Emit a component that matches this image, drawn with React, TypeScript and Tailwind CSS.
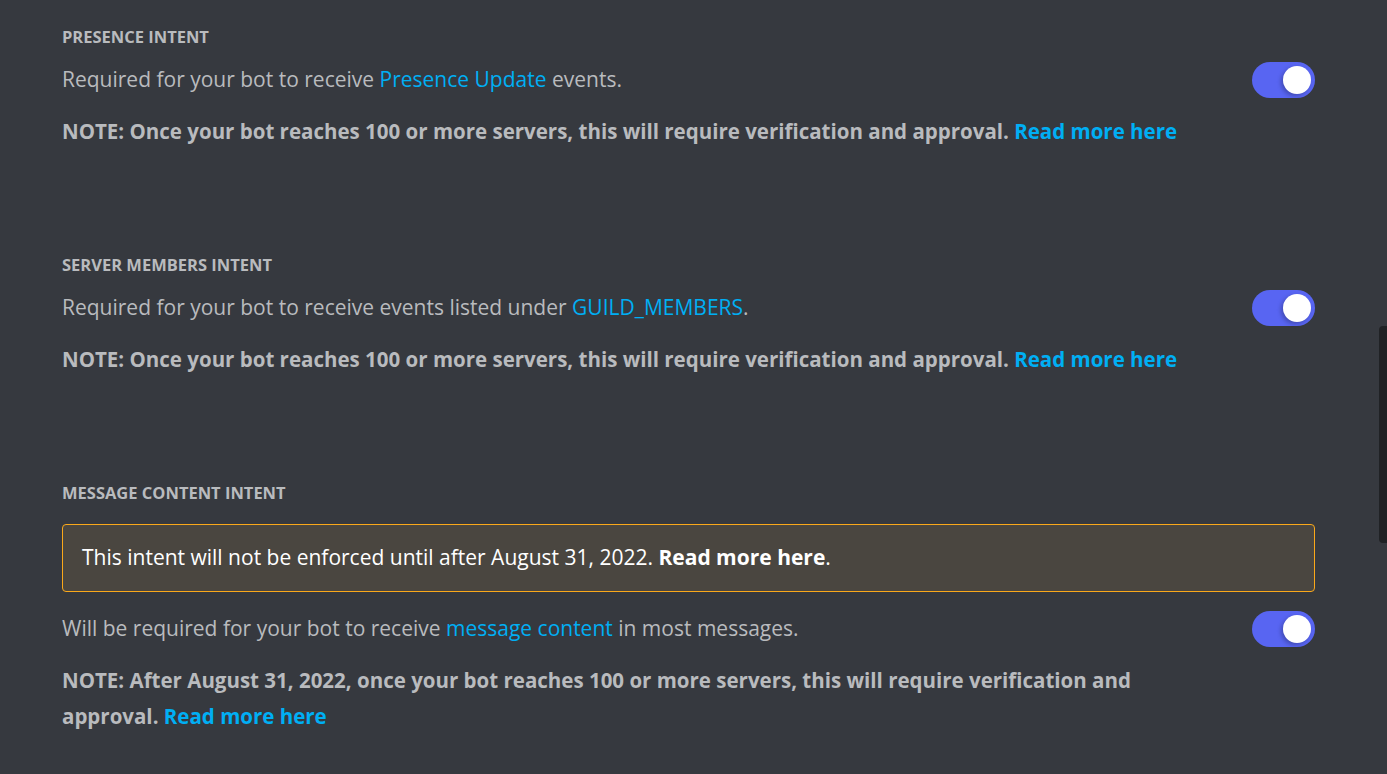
import React, { useState } from 'react';

const Toggle: React.FC<{ on: boolean; onChange: () => void }> = ({ on, onChange }) => (
  <button
    onClick={onChange}
    className={`relative h-[36px] w-[63px] shrink-0 rounded-full ${on ? 'bg-[#5865f2]' : 'bg-[#72767d]'}`}
  >
    <span
      className={`absolute top-[4px] h-[28px] w-[28px] rounded-full bg-white shadow-[-2px_2px_4px_rgba(0,0,0,0.25)] ${on ? 'right-[4px]' : 'left-[4px]'}`}
    />
  </button>
);

const Link: React.FC<{ children: React.ReactNode; bold?: boolean }> = ({ children, bold }) => (
  <a href="#" className={`text-[#00aff4] ${bold ? 'font-bold' : ''}`}>
    {children}
  </a>
);

type IntentProps = {
  title: string;
  description: React.ReactNode;
  note: React.ReactNode;
  notice?: React.ReactNode;
  noteWidth?: string;
};

const Intent: React.FC<IntentProps> = ({ title, description, note, notice, noteWidth }) => {
  const [on, setOn] = useState(true);
  return (
    <div className="flex flex-col">
      <h3 className="text-[16.5px] leading-[20px] font-bold uppercase text-[#b9bbbe]">{title}</h3>
      {notice && (
        <div className="mt-[21px] flex h-[68px] items-center rounded-[4px] border border-[#faa81a] bg-[#4a4640] px-[19px] text-[21px] text-white">
          {notice}
        </div>
      )}
      <div className={`${notice ? 'mt-[19px]' : 'mt-[15px]'} flex items-center justify-between`}>
        <p className="text-[21px] text-[#b9bbbe]">{description}</p>
        <Toggle on={on} onChange={() => setOn(!on)} />
      </div>
      <p className={`mt-[15px] text-[20.5px] leading-[36px] font-bold text-[#b9bbbe] ${noteWidth ?? ''}`}>{note}</p>
    </div>
  );
};

const App: React.FC = () => {
  return (
    <div className="relative h-[774px] w-full overflow-hidden bg-[#36393f] font-['Open_Sans',sans-serif]">
      <div className="flex w-[1253px] flex-col gap-[106px] pl-[62px] pt-[27px] box-content">
        <Intent
          title="Presence Intent"
          description={
            <>
              Required for your bot to receive <Link>Presence Update</Link> events.
            </>
          }
          note={
            <>
              NOTE: Once your bot reaches 100 or more servers, this will require verification and approval.{' '}
              <Link bold>Read more here</Link>
            </>
          }
        />
        <Intent
          title="Server Members Intent"
          description={
            <>
              Required for your bot to receive events listed under <Link>GUILD_MEMBERS</Link>.
            </>
          }
          note={
            <>
              NOTE: Once your bot reaches 100 or more servers, this will require verification and approval.{' '}
              <Link bold>Read more here</Link>
            </>
          }
        />
        <Intent
          title="Message Content Intent"
          notice={
            <span>
              This intent will not be enforced until after August 31, 2022. <span className="font-bold">Read more here</span>.
            </span>
          }
          description={
            <>
              Will be required for your bot to receive <Link>message content</Link> in most messages.
            </>
          }
          note={
            <>
              NOTE: After August 31, 2022, once your bot reaches 100 or more servers, this will require verification and
              approval. <Link bold>Read more here</Link>
            </>
          }
          noteWidth="max-w-[1120px]"
        />
      </div>
      <div className="absolute right-0 top-[326px] h-[217px] w-[8px] rounded-l-[4px] bg-[#202225]" />
    </div>
  );
};

export default App;
